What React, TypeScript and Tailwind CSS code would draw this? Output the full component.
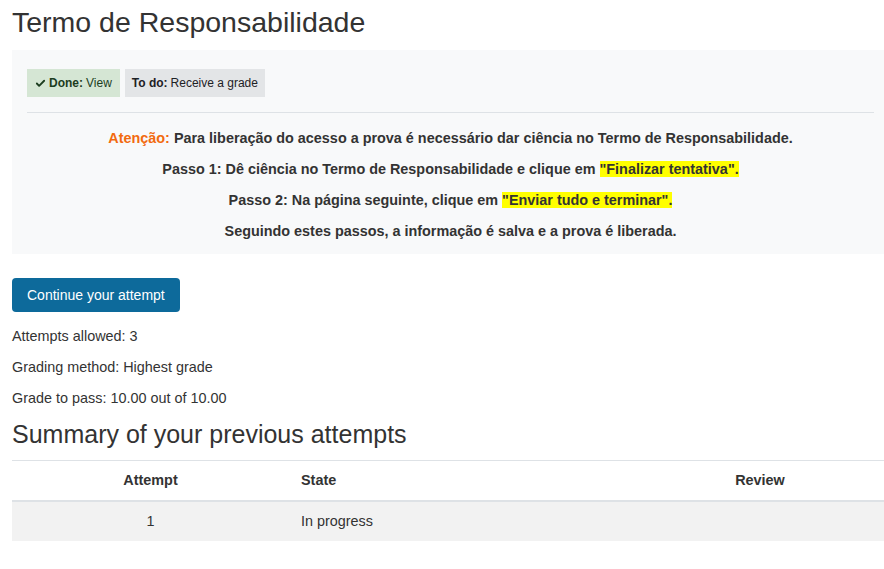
import { Check } from 'lucide-react';

const font = { fontFamily: '"Liberation Sans", Arial, sans-serif' };

const InfoLine = ({ children }: { children: React.ReactNode }) => (
  <p className="text-[14.4px] leading-[21px] text-[#333]">{children}</p>
);

const Mark = ({ children }: { children: React.ReactNode }) => (
  <span className="bg-[#ffff00]">{children}</span>
);

export default function App() {
  return (
    <div className="min-h-[569px] bg-white pl-3 text-[#333]" style={font}>
      <h2 className="pt-[5px] text-[28.5px] leading-[34px] text-[#333]">Termo de Responsabilidade</h2>

      {/* Intro box */}
      <div className="mt-[11px] bg-[#f8f9fa] pl-[15px] pr-[10px] pt-[19px] pb-[12px]">
        <div className="flex gap-[5px]">
          <span className="flex items-center gap-[3px] bg-[#d5e6d4] px-[8px] py-[6px] text-[12px] leading-[16px] text-[#1c3d1f]">
            <Check className="h-[11px] w-[11px]" strokeWidth={4} />
            <b>Done:</b> View
          </span>
          <span className="flex items-center gap-[3px] bg-[#e3e5e7] px-[7px] py-[6px] text-[12px] leading-[16px] text-[#1d2125]">
            <b>To do:</b> Receive a grade
          </span>
        </div>
        <hr className="mt-[15px] border-t border-[#dee2e6]" />
        <div className="mt-[15px] flex flex-col gap-[10px] text-center text-[14.4px] font-bold leading-[21px] text-[#333]">
          <p>
            <span className="text-[#f26a0f]">Atenção:</span> Para liberação do acesso a prova é necessário dar ciência no Termo de Responsabilidade.
          </p>
          <p>
            Passo 1: Dê ciência no Termo de Responsabilidade e clique em <Mark>"Finalizar tentativa".</Mark>
          </p>
          <p>
            Passo 2: Na página seguinte, clique em <Mark>"Enviar tudo e terminar".</Mark>
          </p>
          <p>Seguindo estes passos, a informação é salva e a prova é liberada.</p>
        </div>
      </div>

      <button className="mt-[24px] h-[34px] rounded-[4px] bg-[#0d6a9b] px-[15px] text-[14px] text-white">
        Continue your attempt
      </button>

      <div className="mt-[14px] flex flex-col gap-[10px]">
        <InfoLine>Attempts allowed: 3</InfoLine>
        <InfoLine>Grading method: Highest grade</InfoLine>
        <InfoLine>Grade to pass: 10.00 out of 10.00</InfoLine>
      </div>

      <h3 className="mt-[10px] text-[25px] leading-[30px] text-[#333]">Summary of your previous attempts</h3>

      <table className="mt-[11px] w-full border-collapse text-[14.4px] text-[#333]">
        <thead>
          <tr className="border-t border-b-2 border-t-[#dee2e6] border-b-[#dee2e6]">
            <th className="w-[277px] py-[9px] text-center leading-[21px]">Attempt</th>
            <th className="w-[347px] px-3 py-[9px] text-left leading-[21px]">State</th>
            <th className="py-[9px] text-center leading-[21px]">Review</th>
          </tr>
        </thead>
        <tbody>
          <tr className="bg-[#f2f2f2]">
            <td className="py-[9px] text-center leading-[21px]">1</td>
            <td className="px-3 py-[9px] leading-[21px]">In progress</td>
            <td className="py-[9px]"></td>
          </tr>
        </tbody>
      </table>
    </div>
  );
}
